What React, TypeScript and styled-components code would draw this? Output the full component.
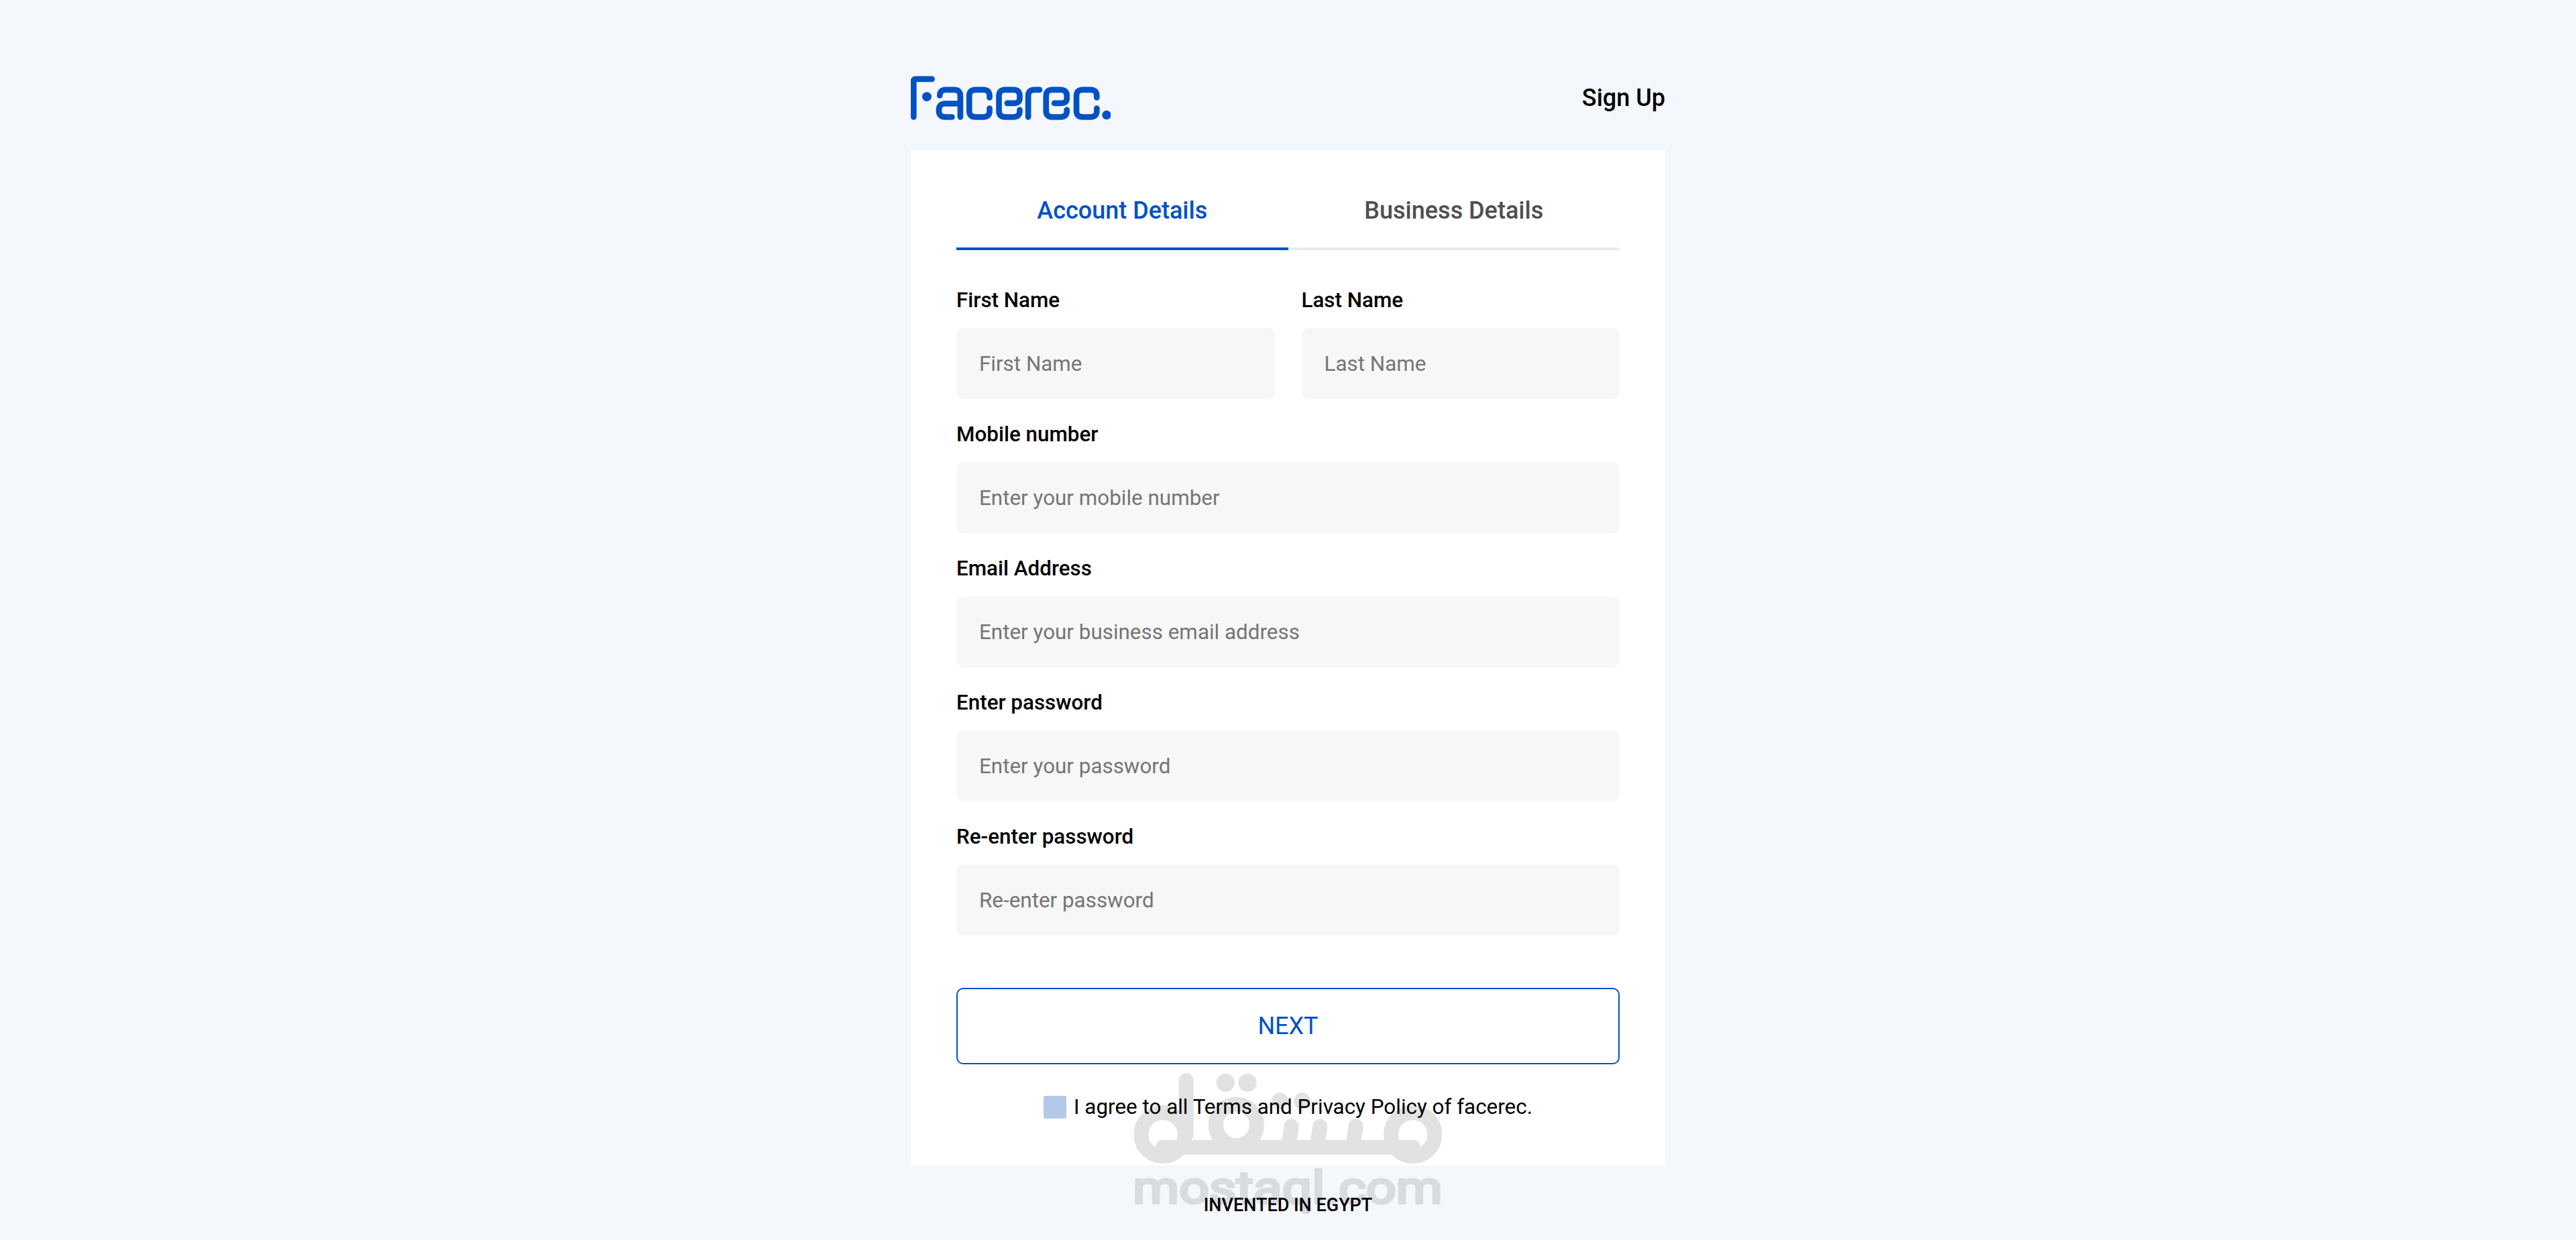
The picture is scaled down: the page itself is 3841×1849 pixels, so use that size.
import styled, { createGlobalStyle } from "styled-components";

const GlobalStyle = createGlobalStyle`
  html, body {
    margin: 0;
    padding: 0;
    background: #f4f7fc;
  }
  * {
    box-sizing: border-box;
  }
`;

const Page = styled.div`
  position: relative;
  min-height: 1849px;
  display: flex;
  flex-direction: column;
  align-items: center;
  font-family: Roboto, "Liberation Sans", sans-serif;
  overflow: hidden;
`;

const Container = styled.div`
  width: 1125px;
`;

const Header = styled.header`
  display: flex;
  justify-content: space-between;
  align-items: center;
  padding: 113px 0 45px;
`;

const SignUp = styled.a`
  font-size: 36px;
  font-weight: 500;
  color: #000;
`;

const Card = styled.main`
  background: #fff;
  padding: 35px 68px 69px;
`;

const Tabs = styled.div`
  display: grid;
  grid-template-columns: 1fr 1fr;
`;

const Tab = styled.div<{ $active?: boolean }>`
  height: 114px;
  display: flex;
  align-items: center;
  justify-content: center;
  font-size: 36px;
  font-weight: 500;
  color: ${(p) => (p.$active ? "#0052c4" : "#4f4f4f")};
  border-bottom: 4px solid ${(p) => (p.$active ? "#0052c4" : "#e6ebf1")};
`;

const Form = styled.form`
  margin-top: 55px;
  display: flex;
  flex-direction: column;
  gap: 33px;
`;

const TwoColumns = styled.div`
  display: grid;
  grid-template-columns: 1fr 1fr;
  gap: 40px;
`;

const Field = styled.div`
  display: flex;
  flex-direction: column;
  gap: 21px;
`;

const Label = styled.label`
  font-size: 31.4px;
  line-height: 40px;
  font-weight: 500;
  color: #000;
`;

const Input = styled.input`
  width: 100%;
  height: 106px;
  border: 0;
  border-radius: 10px;
  padding: 0 34px;
  background: #f7f7f7;
  font-family: inherit;
  font-size: 31.4px;
  outline: none;

  &::placeholder {
    color: #757575;
    opacity: 1;
  }
`;

const NextButton = styled.button`
  display: block;
  width: 100%;
  height: 114px;
  margin-top: 78px;
  background: #fff;
  border: 2px solid #0052c4;
  border-radius: 10px;
  color: #0052c4;
  font-family: inherit;
  font-size: 36px;
`;

const Agree = styled.div`
  margin-top: 45px;
  display: flex;
  align-items: center;
  justify-content: center;
  gap: 11px;
  font-size: 31.4px;
  color: #000;
`;

const Checkbox = styled.input`
  appearance: none;
  width: 34px;
  height: 34px;
  margin: 0;
  border-radius: 3px;
  background: #b3c9e7;
`;

const Footer = styled.footer`
  margin-top: 39px;
  line-height: 40px;
  text-align: center;
  font-size: 27px;
  font-weight: 500;
  color: #000;
`;

const Watermark = styled.svg`
  position: absolute;
  left: 50%;
  top: 1580px;
  margin-left: -260.5px;
  width: 520px;
  height: 269px;
  opacity: 0.11;
  pointer-events: none;
`;

function Logo() {
  return (
    <svg width="298" height="66" viewBox="55 68 895 197" fill="none" stroke="#0052c4" strokeWidth="26" strokeLinecap="round" role="img" aria-label="Facerec.">
      <path d="M68 252V90Q68 82 76 82H150" />
      <circle cx="127" cy="161" r="21" fill="#0052c4" stroke="none" />
      <path d="M185 156Q185 130 213 130H250Q277 130 277 158V252M277 192H210Q181 192 181 220V224Q181 252 210 252H240" />
      <path d="M408 165V158Q408 130 380 130H345Q317 130 317 158V224Q317 252 345 252H380Q408 252 408 225V213" />
      <path d="M487 190H520Q543 190 543 168V158Q543 130 515 130H478Q450 130 450 158V224Q450 252 478 252H515Q543 252 543 225V220" />
      <path d="M581 252V158Q581 130 609 130H632" />
      <path d="M698 190H731Q754 190 754 168V158Q754 130 726 130H689Q661 130 661 158V224Q661 252 689 252H726Q754 252 754 225V220" />
      <path d="M888 165V158Q888 130 860 130H825Q797 130 797 158V224Q797 252 825 252H860Q888 252 888 225V213" />
      <circle cx="932" cy="243" r="20" fill="#0052c4" stroke="none" />
    </svg>
  );
}

function MostaqlMark() {
  return (
    <Watermark viewBox="0 0 1560 807">
      <g fill="none" stroke="#000" strokeWidth="66" strokeLinecap="round" strokeLinejoin="round">
        <circle cx="222" cy="335" r="98" />
        <path d="M326 94V335" />
        <circle cx="550" cy="292" r="92" />
        <path d="M222 392H1340" />
        <path d="M797 298L785 380M925 298L913 380M1085 298L1073 380" />
        <circle cx="1340" cy="335" r="98" />
      </g>
      <g fill="#000">
        <circle cx="502" cy="103" r="41" />
        <circle cx="600" cy="103" r="41" />
        <circle cx="745" cy="185" r="37" />
        <circle cx="845" cy="185" r="37" />
      </g>
      <text
        x="88"
        y="642"
        textLength="1384"
        lengthAdjust="spacingAndGlyphs"
        fontFamily="Roboto, sans-serif"
        fontSize="200"
        fontWeight="400"
        stroke="#000"
        strokeWidth="12"
        strokeLinejoin="round"
      >
        mostaql.com
      </text>
    </Watermark>
  );
}

const fields = [
  { label: "Mobile number", placeholder: "Enter your mobile number" },
  { label: "Email Address", placeholder: "Enter your business email address" },
  { label: "Enter password", placeholder: "Enter your password" },
  { label: "Re-enter password", placeholder: "Re-enter password" },
];

export default function App() {
  return (
    <Page>
      <GlobalStyle />
      <Container>
        <Header>
          <Logo />
          <SignUp>Sign Up</SignUp>
        </Header>
        <Card>
          <Tabs>
            <Tab $active>Account Details</Tab>
            <Tab>Business Details</Tab>
          </Tabs>
          <Form>
            <TwoColumns>
              <Field>
                <Label>First Name</Label>
                <Input placeholder="First Name" />
              </Field>
              <Field>
                <Label>Last Name</Label>
                <Input placeholder="Last Name" />
              </Field>
            </TwoColumns>
            {fields.map((f) => (
              <Field key={f.label}>
                <Label>{f.label}</Label>
                <Input placeholder={f.placeholder} />
              </Field>
            ))}
          </Form>
          <NextButton type="button">NEXT</NextButton>
          <Agree>
            <Checkbox type="checkbox" />
            <span>I agree to all Terms and Privacy Policy of facerec.</span>
          </Agree>
        </Card>
        <Footer>INVENTED IN EGYPT</Footer>
      </Container>
      <MostaqlMark />
    </Page>
  );
}
